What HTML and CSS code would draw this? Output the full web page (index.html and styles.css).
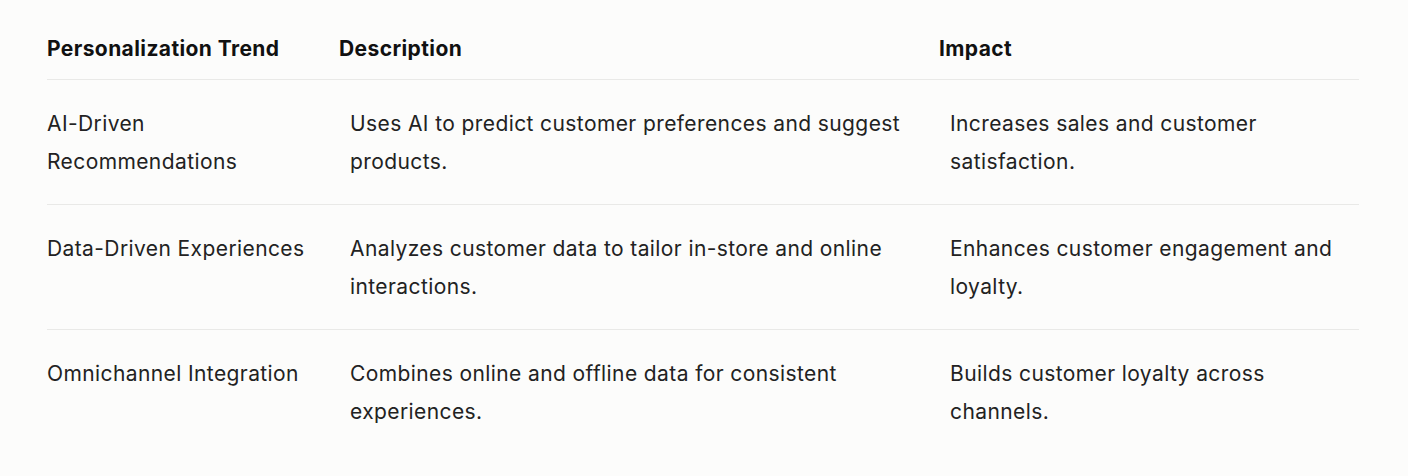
FILE: index.html
```html
<!DOCTYPE html>
<html lang="en">
<head>
<meta charset="utf-8">
<title>Personalization Trends</title>
<link rel="stylesheet" href="styles.css">
</head>
<body>
<div class="page">
  <div class="table">
    <div class="row head">
      <div class="cell c1">Personalization Trend</div>
      <div class="cell c2">Description</div>
      <div class="cell c3">Impact</div>
    </div>
    <div class="row">
      <div class="cell c1">AI-Driven Recommendations</div>
      <div class="cell c2">Uses AI to predict customer preferences and suggest products.</div>
      <div class="cell c3">Increases sales and customer satisfaction.</div>
    </div>
    <div class="row">
      <div class="cell c1">Data-Driven Experiences</div>
      <div class="cell c2">Analyzes customer data to tailor in-store and online interactions.</div>
      <div class="cell c3">Enhances customer engagement and loyalty.</div>
    </div>
    <div class="row last">
      <div class="cell c1">Omnichannel Integration</div>
      <div class="cell c2">Combines online and offline data for consistent experiences.</div>
      <div class="cell c3">Builds customer loyalty across channels.</div>
    </div>
  </div>
</div>
</body>
</html>
```
FILE: styles.css
```css
html, body {
  margin: 0;
  padding: 0;
  background: #fcfcfb;
}
body {
  font-family: Inter, "Noto Sans", sans-serif;
  color: #222;
}
.page {
  padding: 17px 49px 0 47px;
}
.table {
  display: flex;
  flex-direction: column;
}
.row {
  display: grid;
  grid-template-columns: 292px 600px 1fr;
  border-bottom: 1px solid #e9e9e7;
}
.row.last {
  border-bottom: none;
}
.cell {
  font-size: 21px;
  letter-spacing: 0.4px;
  line-height: 38px;
  padding: 25px 0 23px 0;
}
.row .c2, .row .c3 {
  padding-left: 11px;
  padding-right: 10px;
}
.row.head .cell {
  font-weight: 700;
  color: #111;
  padding: 13px 0 11px 0;
}
.row.head .c2, .row.head .c3 {
  padding-left: 0;
}
```
